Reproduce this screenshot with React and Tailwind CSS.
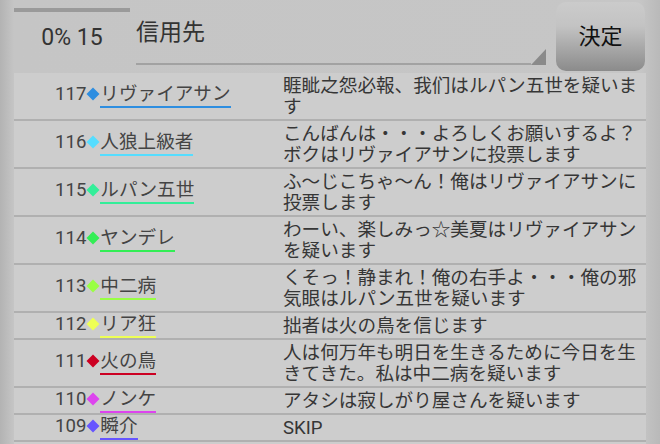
const rows = [
  { no: 117, color: '#2e8ee0', name: 'リヴァイアサン', msg: '睚眦之怨必報、我们はルパン五世を疑います' },
  { no: 116, color: '#55ddff', name: '人狼上級者', msg: 'こんばんは・・・よろしくお願いするよ？ボクはリヴァイアサンに投票します' },
  { no: 115, color: '#33ee99', name: 'ルパン五世', msg: 'ふ～じこちゃ～ん！俺はリヴァイアサンに投票します' },
  { no: 114, color: '#33ee55', name: 'ヤンデレ', msg: 'わーい、楽しみっ☆美夏はリヴァイアサンを疑います' },
  { no: 113, color: '#99ff44', name: '中二病', msg: 'くそっ！静まれ！俺の右手よ・・・俺の邪気眼はルパン五世を疑います' },
  { no: 112, color: '#eeff55', name: 'リア狂', msg: '拙者は火の鳥を信じます' },
  { no: 111, color: '#cc0022', name: '火の鳥', msg: '人は何万年も明日を生きるために今日を生きてきた。私は中二病を疑います' },
  { no: 110, color: '#dd44ee', name: 'ノンケ', msg: 'アタシは寂しがり屋さんを疑います' },
  { no: 109, color: '#6655ff', name: '瞬介', msg: 'SKIP' },
];

const font = "font-['Roboto','Noto_Sans_CJK_JP',sans-serif]";

function Row({ no, color, name, msg }) {
  return (
    <div className="flex border-b-2 border-[#b0b0b0]">
      {/* speaker */}
      <div className="w-[269px] shrink-0 flex items-center pl-[41px]">
        <div className="flex items-baseline text-[18.6px] leading-[21px] text-[#444]">
          <span>{no}</span>
          <svg width="14" height="14" viewBox="0 0 14 14" className="shrink-0 translate-y-[1px]">
            <polygon points="7,0.5 13.5,7 7,13.5 0.5,7" fill={color} />
          </svg>
          <span className="border-b-2 pb-[1px]" style={{ borderColor: color }}>
            {name}
          </span>
        </div>
      </div>
      {/* message */}
      <div className="flex-1 min-w-0 pr-[8px] pt-[3px] pb-[1px] text-[18.6px] leading-[21px] text-[#363636]">
        {msg}
      </div>
    </div>
  );
}

export default function App() {
  return (
    <div
      className={`w-[660px] h-[444px] overflow-hidden flex flex-col ${font} bg-[linear-gradient(to_right,#b3b3b3,#c5c5c5_14px,#c6c6c6_97%,#b9b9b9)]`}
    >
      {/* ── Header ─────────────────────────────────────────── */}
      <div className="h-[73px] shrink-0 flex pl-[14px]">
        <div className="w-[116px] shrink-0 flex flex-col">
          <div className="mt-[8px] h-[4px] bg-[#9a9a9a]" />
          <div className="mt-[12px] text-center text-[23px] leading-[27px] text-[#333]">0% 15</div>
        </div>

        <div className="ml-[6px] w-[410px] h-[63px] flex flex-col">
          <div className="pt-[16px] text-[23px] leading-[33px] text-[#333]">信用先</div>
          <div className="mt-auto flex items-end">
            <div className="flex-1 h-[2px] bg-[#a2a2a2]" />
            <svg width="15" height="16" viewBox="0 0 15 16" className="shrink-0 block">
              <polygon points="15,0 15,16 0,16" fill="#8a8a8a" />
            </svg>
          </div>
        </div>

        <button className="ml-[10px] mt-[2px] w-[89px] h-[69px] rounded-[10px] bg-[linear-gradient(#cbcbcb,#c3c3c3_35%,#8b8b8b)] flex items-center justify-center text-[22px] text-[#111]">
          決定
        </button>
      </div>

      {/* ── Log list ───────────────────────────────────────── */}
      <div className="flex-1 mx-[14px] bg-[#cdcdcd] flex flex-col">
        {rows.map((r) => (
          <Row key={r.no} {...r} />
        ))}
      </div>
    </div>
  );
}
